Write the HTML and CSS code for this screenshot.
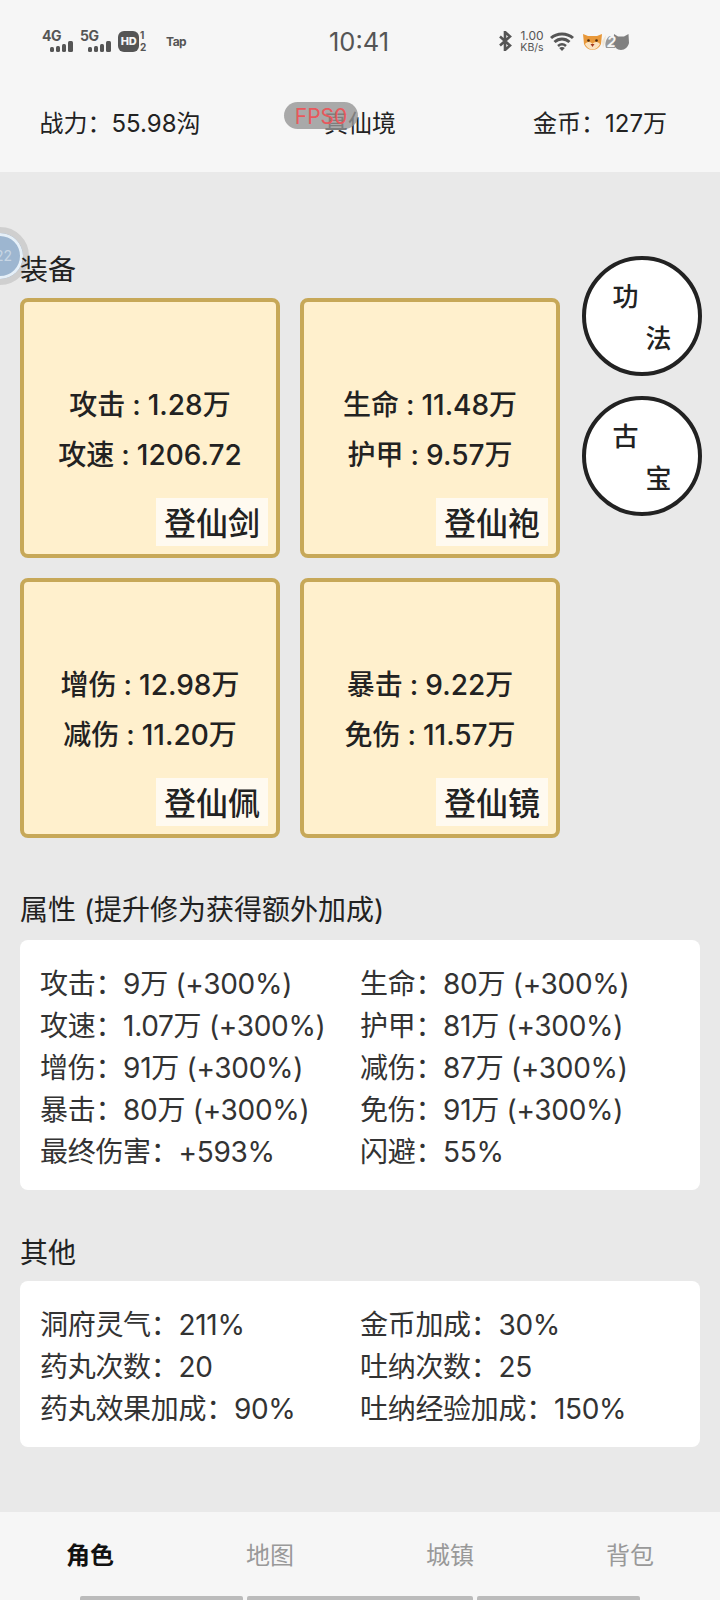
FILE: index.html
```html
<!DOCTYPE html>
<html lang="en">

<head>
    <meta charset="UTF-8">
    <meta name="viewport" content="width=device-width, initial-scale=1.0">
    <title>角色</title>
    <link rel="stylesheet" href="styles.css">
</head>

<body>
    <div id="wrap">
        <div class="top">
            <div class="status">
                <div class="status-left">
                    <div class="signal">
                        <span class="net">4G</span>
                        <svg class="bars" width="24" height="11" viewBox="0 0 24 11"><rect x="0" y="6" width="4" height="5" rx="1.5"/><rect x="6" y="5" width="4" height="6" rx="1.5"/><rect x="12" y="3" width="4" height="8" rx="1.5"/><rect x="18" y="0" width="5" height="11" rx="1.5"/></svg>
                    </div>
                    <div class="signal">
                        <span class="net">5G</span>
                        <svg class="bars" width="24" height="11" viewBox="0 0 24 11"><rect x="0" y="6" width="4" height="5" rx="1.5"/><rect x="6" y="5" width="4" height="6" rx="1.5"/><rect x="12" y="3" width="4" height="8" rx="1.5"/><rect x="18" y="0" width="5" height="11" rx="1.5"/></svg>
                    </div>
                    <span class="hd">HD</span>
                    <span class="sim"><i>1</i><i>2</i></span>
                    <span class="tap">Tap</span>
                </div>
                <div class="time">10:41</div>
                <div class="status-right">
                    <svg class="bt" width="13" height="20" viewBox="0 0 13 20"><path d="M1 5.5 L11 14.5 L6 19 V1 L11 5.5 L1 14.5" fill="none" stroke="#555" stroke-width="2.6"/></svg>
                    <span class="speed"><b>1.00</b><i>KB/s</i></span>
                    <svg class="wifi" width="24" height="19" viewBox="0 0 24 19"><path d="M1 6 C7 0.5 17 0.5 23 6" fill="none" stroke="#555" stroke-width="3"/><path d="M4.5 10 C9 6 15 6 19.5 10" fill="none" stroke="#555" stroke-width="3"/><path d="M8 14 C10.5 11.8 13.5 11.8 16 14" fill="none" stroke="#555" stroke-width="2.6"/><path d="M12 19 L9.2 16 C10.8 14.8 13.2 14.8 14.8 16 Z" fill="#555"/></svg>
                    <div class="pets">
                        <svg class="dog" width="19" height="17" viewBox="0 0 19 17"><path d="M0 1 L5 3 H14 L19 1 L18 11 C17 14 13 17 9.5 17 C6 17 2 14 1 11 Z" fill="#e8983a"/><path d="M2 11 C5 8 8 9 9.5 11 C11 9 14 8 17 11 C15 15 12 16.5 9.5 16.5 C7 16.5 4 15 2 11 Z" fill="#fbe3c0"/><circle cx="5.5" cy="7.5" r="1.3" fill="#4a2a10"/><circle cx="13.5" cy="7.5" r="1.3" fill="#4a2a10"/><path d="M7.5 11 H11.5 L9.5 14 Z" fill="#a33a20"/></svg>
                        <svg class="cat" width="28" height="17" viewBox="0 0 28 17"><path d="M1 8 L5 2 L4 9 L2 15 Z" fill="#efe6d6"/><path d="M5 15 C3 10 6 4 9 3 C11 3 13 4 14 6 V15 Z" fill="#999"/><path d="M13 1 L17 3.5 H23 L27.5 1 L28 10 C27 14 24 17 20 17 C16 17 13 14 12.5 10 Z" fill="#808080"/></svg>
                        <span class="pets-num">2</span>
                    </div>
                </div>
            </div>
            <div class="power">
                <div>战力：55.98沟</div>
                <div>真仙境</div>
                <div>金币：127万</div>
            </div>
            <div class="fps">FPS0</div>
        </div>

        <div class="ball"><span>22</span></div>

        <div class="main">
            <div class="gear">
                <div class="gear-left">
                    <div class="title">装备</div>
                    <div class="cards">
                        <div class="card">
                            <p>攻击<em>:</em>1.28万</p>
                            <p>攻速<em>:</em>1206.72</p>
                            <span class="name">登仙剑</span>
                        </div>
                        <div class="card">
                            <p>生命<em>:</em>11.48万</p>
                            <p>护甲<em>:</em>9.57万</p>
                            <span class="name">登仙袍</span>
                        </div>
                        <div class="card">
                            <p>增伤<em>:</em>12.98万</p>
                            <p>减伤<em>:</em>11.20万</p>
                            <span class="name">登仙佩</span>
                        </div>
                        <div class="card">
                            <p>暴击<em>:</em>9.22万</p>
                            <p>免伤<em>:</em>11.57万</p>
                            <span class="name">登仙镜</span>
                        </div>
                    </div>
                </div>
                <div class="gear-right">
                    <div class="circle"><span>功</span><span>法</span></div>
                    <div class="circle"><span>古</span><span>宝</span></div>
                </div>
            </div>

            <div class="title title-attr">属性 (提升修为获得额外加成)</div>
            <div class="box">
                <div>攻击：9万 (+300%)</div>
                <div>生命：80万 (+300%)</div>
                <div>攻速：1.07万 (+300%)</div>
                <div>护甲：81万 (+300%)</div>
                <div>增伤：91万 (+300%)</div>
                <div>减伤：87万 (+300%)</div>
                <div>暴击：80万 (+300%)</div>
                <div>免伤：91万 (+300%)</div>
                <div>最终伤害：+593%</div>
                <div>闪避：55%</div>
            </div>

            <div class="title title-other">其他</div>
            <div class="box box-other">
                <div>洞府灵气：211%</div>
                <div>金币加成：30%</div>
                <div>药丸次数：20</div>
                <div>吐纳次数：25</div>
                <div>药丸效果加成：90%</div>
                <div>吐纳经验加成：150%</div>
            </div>
        </div>

        <div class="nav">
            <div class="nav-tabs">
                <a href="#" class="active">角色</a>
                <a href="#">地图</a>
                <a href="#">城镇</a>
                <a href="#">背包</a>
            </div>
            <div class="home">
                <span class="home-a"></span>
                <span class="home-b"></span>
                <span class="home-a"></span>
            </div>
        </div>
    </div>
</body>

</html>
```

FILE: styles.css
```css
* {
    box-sizing: border-box;
    padding: 0;
    margin: 0;
}

body {
    background-color: #e9e9e9;
    font-family: Inter, "Noto Sans CJK SC", sans-serif;
    color: #222;
    overflow: hidden;
}

#wrap {
    width: 720px;
    height: 1600px;
    position: relative;
    display: flex;
    flex-direction: column;
    overflow: hidden;
}

/* 顶部 */

.top {
    height: 172px;
    background: #f6f6f6;
    position: relative;
}

.status {
    height: 82px;
    display: flex;
    align-items: center;
    padding-left: 42px;
    color: #555;
}

.status-left {
    width: 287px;
    display: flex;
    align-items: center;
}

.signal {
    width: 38px;
    height: 22px;
    display: flex;
    flex-direction: column;
}

.net {
    font-size: 14px;
    line-height: 11px;
    font-weight: 700;
    letter-spacing: -0.5px;
}

.bars {
    fill: #555;
    margin-left: 8px;
}

.hd {
    width: 21px;
    height: 21px;
    background: #555;
    border-radius: 6px;
    color: #f6f6f6;
    font-size: 11px;
    font-weight: 800;
    line-height: 21px;
    text-align: center;
    letter-spacing: -0.3px;
}

.sim {
    width: 9px;
    margin-left: 1px;
    display: flex;
    flex-direction: column;
    font-size: 10px;
    line-height: 12.1px;
    font-weight: 700;
}

.sim i {
    font-style: normal;
}

.tap {
    margin-left: 17px;
    font-size: 12px;
    font-weight: 700;
    letter-spacing: -0.5px;
}

.time {
    width: 170px;
    font-size: 25.5px;
}

.status-right {
    display: flex;
    align-items: center;
}

.speed {
    width: 26px;
    margin-left: 7px;
    display: flex;
    flex-direction: column;
    align-items: center;
}

.speed b {
    font-size: 12px;
    line-height: 12px;
    font-weight: 400;
}

.speed i {
    font-size: 10.5px;
    line-height: 11px;
    font-style: normal;
}

.wifi {
    margin-left: 5px;
}

.pets {
    margin-left: 9px;
    display: flex;
    align-items: center;
    position: relative;
}

.cat {
    margin-left: -1px;
}

.pets-num {
    position: absolute;
    left: 24px;
    top: 0;
    font-size: 14px;
    font-weight: 700;
    font-style: italic;
    color: #f6f6f6;
}

.power {
    display: flex;
    font-size: 24px;
    line-height: 34px;
    margin-top: 25px;
}

.power div {
    flex: 1;
    text-align: center;
}

.fps {
    position: absolute;
    left: 284px;
    top: 102px;
    width: 74px;
    height: 27px;
    background: rgba(150, 150, 150, 0.8);
    border-radius: 14px;
    color: #e8585c;
    font-size: 21px;
    line-height: 29px;
    text-align: center;
}

.ball {
    position: absolute;
    left: -29px;
    top: 227px;
    width: 58px;
    height: 58px;
    border: 6px solid #cfcfcf;
    border-radius: 50%;
    background: #9db6d0;
    box-shadow: inset 0 0 0 3px #e6f0f8;
    color: #c8d6e4;
    font-size: 14px;
    line-height: 46px;
    text-align: right;
    padding-right: 11px;
}

/* 内容 */

.main {
    flex: 1;
    padding: 0 20px;
    position: relative;
}

.title {
    font-size: 28px;
    line-height: 36px;
}

.gear {
    display: flex;
    margin-top: 84px;
}

.gear-left .title {
    height: 42px;
    line-height: 28px;
}

.cards {
    width: 540px;
    display: grid;
    grid-template-columns: 260px 260px;
    gap: 20px;
}

.card {
    height: 260px;
    border: 4px solid #c7a858;
    border-radius: 8px;
    background: #fff0cd;
    position: relative;
    display: flex;
    flex-direction: column;
    align-items: center;
    justify-content: center;
    padding-top: 4px;
}

.card p {
    font-size: 28px;
    line-height: 50px;
    font-weight: 500;
    white-space: nowrap;
}

.card em {
    font-style: normal;
    margin: 0 7px;
}

.name {
    position: absolute;
    right: 8px;
    bottom: 8px;
    height: 48px;
    padding: 0 8px;
    background: #fffaf0;
    font-size: 32px;
    line-height: 52px;
    font-weight: 500;
}

.gear-right {
    margin-left: 22px;
    display: flex;
    flex-direction: column;
    gap: 20px;
}

.circle {
    width: 120px;
    height: 120px;
    border: 4px solid #222;
    border-radius: 50%;
    background: #fff;
    display: grid;
    grid-template-columns: 33px 33px;
    grid-template-rows: 42px 42px;
    justify-content: center;
    align-content: center;
    font-size: 26px;
    font-weight: 500;
    line-height: 46px;
    text-align: center;
}

.circle span:last-child {
    grid-column: 2;
    grid-row: 2;
}

.title-attr {
    margin-top: 54px;
}

.title-other {
    margin-top: 45px;
}

.box {
    margin-top: 12px;
    padding: 23px 20px 17px 20px;
    background: #fff;
    border-radius: 8px;
    display: grid;
    grid-template-columns: 320px 320px;
    font-size: 28px;
    line-height: 42px;
    letter-spacing: -0.3px;
    color: #333;
    white-space: nowrap;
}

.box-other {
    margin-top: 10px;
}

/* 底部 */

.nav {
    height: 88px;
    background: #f6f6f6;
}

.nav-tabs {
    display: flex;
    height: 84px;
    padding-top: 26px;
}

.nav-tabs a {
    flex: 1;
    text-align: center;
    font-size: 24px;
    line-height: 36px;
    text-decoration: none;
    color: #999;
}

.nav-tabs a.active {
    color: #111;
    font-weight: 700;
}

.home {
    display: flex;
    justify-content: center;
    gap: 4px;
}

.home span {
    height: 4px;
    background: #bbb;
    border-radius: 2px 2px 0 0;
}

.home-a {
    width: 163px;
}

.home-b {
    width: 226px;
}
```
